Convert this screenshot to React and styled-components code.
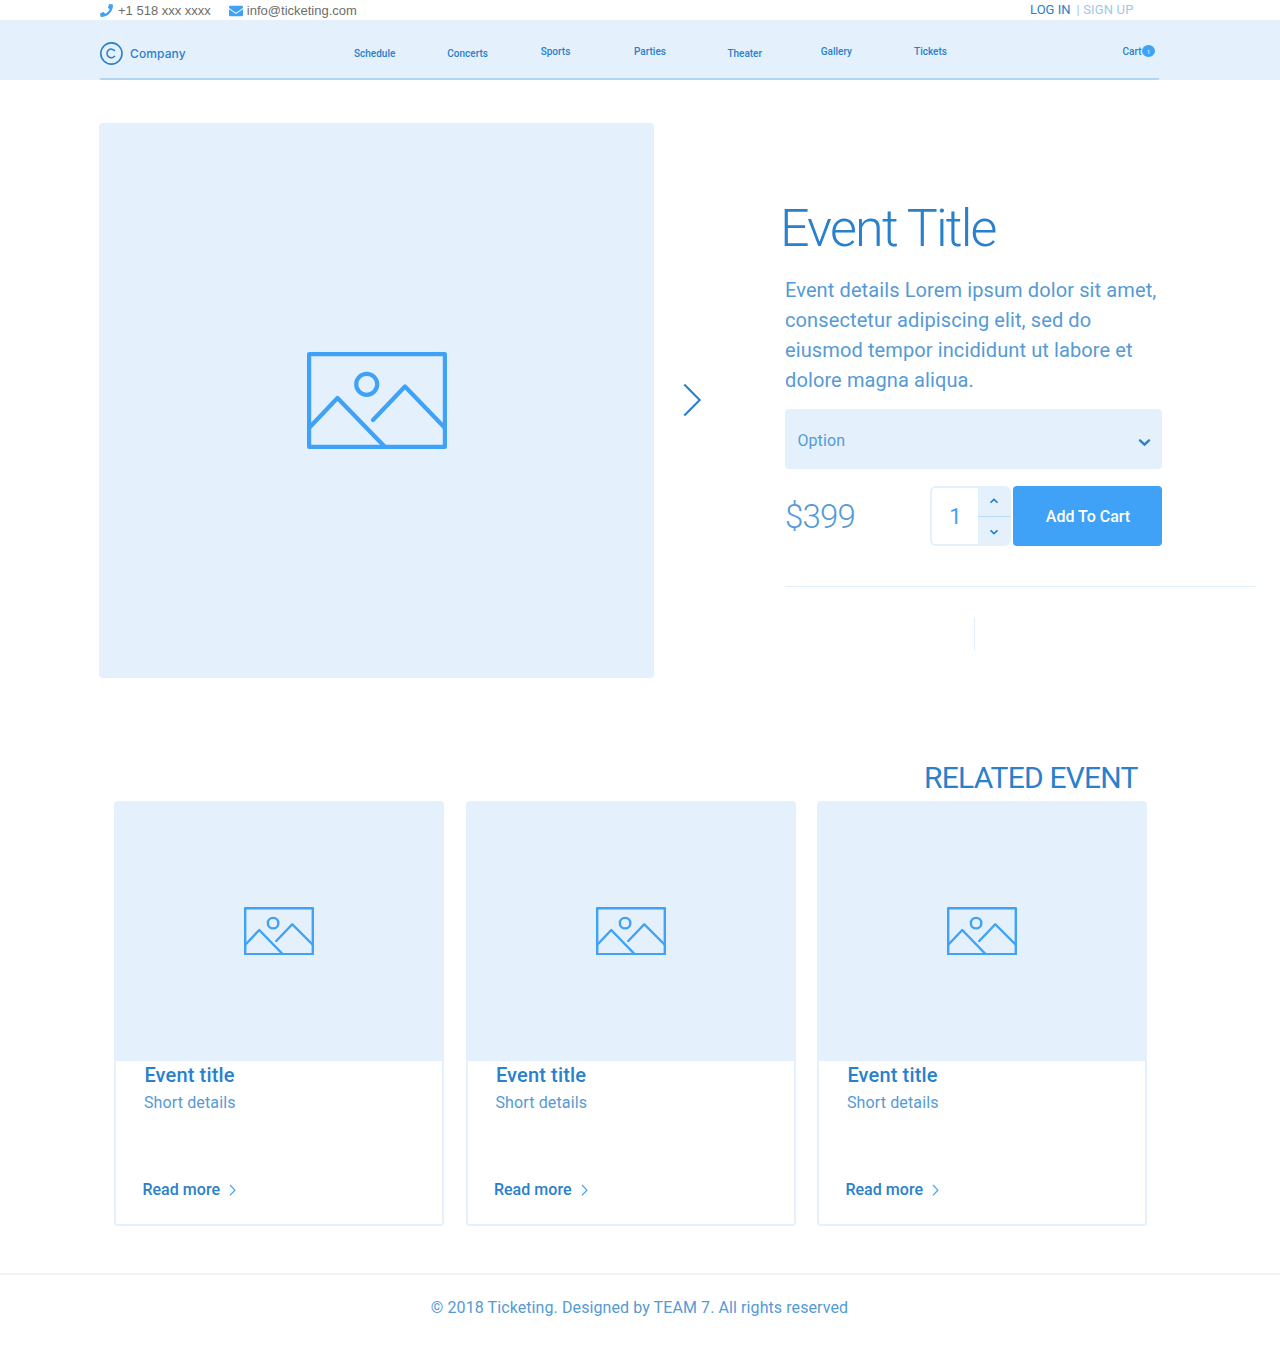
import React from "react";
import styled, { createGlobalStyle } from "styled-components";
import { FaPhone, FaEnvelope } from "react-icons/fa";

const GlobalStyle = createGlobalStyle`
  * { box-sizing: border-box; }
  body { margin: 0; background: #fff; font-family: Roboto, "Liberation Sans", sans-serif; }
  h1, h2, h3, p { margin: 0; font-weight: 400; }
  button { font: inherit; border: 0; padding: 0; background: none; }
  svg { display: block; flex: none; }
`;

const Page = styled.div`
  width: 1280px;
  height: 1347px;
  overflow: hidden;
  color: #2980cc;
`;

const TopBar = styled.div`
  display: flex;
  justify-content: space-between;
  height: 20px;
  padding: 0 146.5px 0 100px;
`;

const Contacts = styled.div`
  display: flex;
  align-items: center;
  gap: 18px;
  padding-top: 2px;
  font: 13px/18px "Liberation Sans", Arial, sans-serif;
  color: #6d6d6d;
`;

const Contact = styled.span`
  display: flex;
  align-items: center;
  gap: ${(p) => p.$gap};
  svg { margin-top: -1px; color: #3fa2f7; }
`;

const Account = styled.div`
  display: flex;
  font-size: 13px;
  line-height: 19px;
  white-space: pre;
`;

const SignUp = styled.span`
  margin-left: 6px;
  letter-spacing: 0.15px;
  color: #9fc6e8;
`;

const Header = styled.header`
  height: 60px;
  padding: 0 121px 0 100px;
  background: #e4f0fc;
`;

const HeaderInner = styled.div`
  display: flex;
  height: 60px;
  border-bottom: 2px solid #b2d5f3;
`;

const Brand = styled.div`
  display: flex;
  align-items: center;
  gap: 7px;
  width: 254px;
  height: 58px;
  padding-top: 9px;
  font: 500 12px/16px Inter, sans-serif;
  letter-spacing: 0.1px;
`;

const Nav = styled.nav`
  display: grid;
  grid-template-columns: repeat(7, 93.35px);
  height: 30px;
  margin-top: 22px;
  font-size: 10px;
  font-weight: 500;
  line-height: 19px;
`;

const NavItem = styled.a`
  padding-top: ${(p) => (p.$low ? "2px" : "0")};
`;

const Cart = styled.div`
  display: flex;
  align-items: center;
  height: 19px;
  margin: 22px 4px 0 auto;
  font-size: 10px;
  font-weight: 500;
`;

const CartCount = styled.span`
  width: 13px;
  height: 12px;
  margin: 0 0 1px 0.5px;
  border-radius: 50%;
  background: #3fa2f7;
  color: #d9ecfd;
  font-size: 6px;
  line-height: 13px;
  text-align: center;
`;

const Product = styled.section`
  display: flex;
  height: 683px;
  padding: 43px 0 0 99px;
`;

const Hero = styled.div`
  display: flex;
  align-items: center;
  justify-content: center;
  width: 555px;
  height: 555px;
  border-radius: 4px;
  background: #e4f0fc;
`;

const NextButton = styled.button`
  display: flex;
  align-items: center;
  width: 131px;
  height: 554px;
  padding-left: 29px;
  color: #2980cc;
`;

const Info = styled.div`
  width: 471px;
  padding-top: 76px;
`;

const Title = styled.h1`
  margin-left: -5px;
  font-size: 52px;
  font-weight: 300;
  line-height: 60px;
  letter-spacing: -1.8px;
`;

const Description = styled.p`
  width: 385px;
  margin-top: 16px;
  font-size: 20px;
  line-height: 30px;
  letter-spacing: 0.11px;
  color: #549ad6;
`;

const Select = styled.div`
  display: flex;
  align-items: center;
  justify-content: space-between;
  width: 377px;
  height: 60px;
  margin-top: 14px;
  padding: 3px 11px 0 12.4px;
  border-radius: 4px;
  background: #e4f0fc;
  font-size: 16px;
  letter-spacing: 0.1px;
  svg { margin-top: 3px; color: #2980cc; }
  span { color: #549ad6; }
`;

const BuyRow = styled.div`
  display: flex;
  width: 377px;
  height: 60px;
  margin-top: 17px;
`;

const Price = styled.div`
  width: 145px;
  padding-top: 1px;
  font-size: 33px;
  font-weight: 300;
  line-height: 60px;
  letter-spacing: -0.8px;
  color: #549ad6;
`;

const Quantity = styled.div`
  display: flex;
  width: 81px;
  height: 60px;
  border: 2px solid #e4f0fc;
  border-right: 0;
  border-radius: 6px;
  overflow: hidden;
`;

const QuantityValue = styled.div`
  width: 46px;
  padding-left: 1px;
  font-size: 22px;
  line-height: 57px;
  text-align: center;
  color: #3fa2f7;
`;

const Steps = styled.div`
  display: grid;
  grid-template-rows: 29px 27px;
  flex: 1;
  background: #e4f0fc;
`;

const Step = styled.button`
  display: flex;
  align-items: center;
  padding-left: 12px;
  color: #2980cc;
  border-bottom: ${(p) => (p.$divided ? "1px solid #b9dbf8" : "0")};
  svg { margin-top: ${(p) => (p.$divided ? "-2px" : "2px")}; }
`;

const AddButton = styled.button`
  width: 149px;
  height: 60px;
  margin-left: 2px;
  padding: 1px 0 0 1px;
  border-radius: 4px;
  background: #3fa2f7;
  color: #fff;
  font-size: 16px;
  font-weight: 500;
  line-height: 59px;
`;

const Rule = styled.div`
  height: 1px;
  margin-top: 40px;
  background: #e1effc;
`;

const ShortRule = styled.div`
  width: 1px;
  height: 33px;
  margin: 30px 0 0 189px;
  background: #e1effc;
`;

const Related = styled.section`
  padding: 0 133px 0 114px;
`;

const RelatedTitle = styled.h2`
  height: 38px;
  padding-right: 9.5px;
  font-size: 30px;
  line-height: 30px;
  letter-spacing: -0.8px;
  text-align: right;
`;

const Cards = styled.div`
  display: grid;
  grid-template-columns: repeat(3, 330px);
  justify-content: space-between;
`;

const Card = styled.article`
  height: 425px;
  border: 2px solid #e4f0fc;
  border-radius: 4px;
`;

const Thumb = styled.div`
  display: flex;
  align-items: center;
  justify-content: center;
  height: 258px;
  padding-bottom: 2px;
  background: #e4f0fc;
`;

const CardBody = styled.div`
  display: flex;
  flex-direction: column;
  align-items: flex-start;
  padding-left: 26.4px;
`;

const CardTitle = styled.h3`
  margin-left: 2px;
  font-size: 20px;
  font-weight: 500;
  line-height: 28px;
  letter-spacing: 0.15px;
`;

const CardText = styled.p`
  margin: 4px 0 0 1.6px;
  font-size: 16px;
  line-height: 20px;
  letter-spacing: 0.13px;
  color: #549ad6;
`;

const ReadMore = styled.a`
  display: flex;
  align-items: center;
  gap: 9px;
  margin-top: 67px;
  font-size: 16px;
  font-weight: 500;
  line-height: 20px;
  letter-spacing: 0.04px;
  svg { color: #3fa2f7; }
`;

const Footer = styled.footer`
  margin-top: 47px;
  padding: 22px 1px 0 0;
  border-top: 2px solid #f1f3f5;
  font-size: 16px;
  line-height: 22px;
  letter-spacing: 0.09px;
  text-align: center;
  color: #549ad6;
`;

const navItems = [
  ["Schedule", true],
  ["Concerts", true],
  ["Sports", false],
  ["Parties", false],
  ["Theater", true],
  ["Gallery", false],
  ["Tickets", false],
];

function Picture({ width, stroke = 4.2, shift = 0 }) {
  const edge = stroke / 2;
  return (
    <svg width={width} height={width * (97 / 140)} viewBox="0 0 140 97" fill="none" stroke="#3fa2f7" strokeWidth={stroke} strokeLinejoin="round">
      <rect x={edge} y={edge} width={140 - stroke} height={97 - stroke} />
      <circle cx={59.7 - shift} cy="32.3" r="10.5" />
      <path d="M2 76L30.5 46L78 95" />
      <path d={`M${66 - shift} 68L${98 - shift} 34.5L138 76`} strokeLinecap="round" />
    </svg>
  );
}

function Chevron({ width, height, points, stroke, cap = "butt" }) {
  return (
    <svg width={width} height={height} viewBox={`0 0 ${width} ${height}`} fill="none" stroke="currentColor" strokeWidth={stroke} strokeLinecap={cap}>
      <polyline points={points} />
    </svg>
  );
}

function Logo() {
  return (
    <svg width="23" height="24" viewBox="0 0 23 24" fill="none" stroke="#2980cc">
      <circle cx="11.4" cy="11.5" r="10.6" strokeWidth="1.6" />
      <path d="M14.9 9A4.3 4.3 0 1 0 14.9 13.8" strokeWidth="1.5" />
    </svg>
  );
}

export default function App() {
  return (
    <Page>
      <GlobalStyle />
      <TopBar>
        <Contacts>
          <Contact $gap="5px"><FaPhone size={13} />+1 518 xxx xxxx</Contact>
          <Contact $gap="4px"><FaEnvelope size={14} />info@ticketing.com</Contact>
        </Contacts>
        <Account>LOG IN<SignUp>| SIGN UP</SignUp></Account>
      </TopBar>
      <Header>
        <HeaderInner>
          <Brand><Logo />Company</Brand>
          <Nav>
            {navItems.map(([name, low]) => <NavItem key={name} $low={low}>{name}</NavItem>)}
          </Nav>
          <Cart>Cart<CartCount>1</CartCount></Cart>
        </HeaderInner>
      </Header>
      <Product>
        <Hero><Picture width={140} /></Hero>
        <NextButton aria-label="Next">
          <Chevron width={19} height={34} points="1.3,1.5 16.7,17 1.3,32.5" stroke={2.1} />
        </NextButton>
        <Info>
          <Title>Event Title</Title>
          <Description>
            Event details Lorem ipsum dolor sit amet, consectetur adipiscing elit, sed do eiusmod tempor incididunt ut labore et dolore magna aliqua.
          </Description>
          <Select>
            <span>Option</span>
            <Chevron width={13} height={9} points="2,2.4 6.5,6.7 11,2.4" stroke={2.4} cap="round" />
          </Select>
          <BuyRow>
            <Price>$399</Price>
            <Quantity>
              <QuantityValue>1</QuantityValue>
              <Steps>
                <Step $divided aria-label="Increase">
                  <Chevron width={8} height={6} points="0.5,4.7 4,1.4 7.5,4.7" stroke={1.7} />
                </Step>
                <Step aria-label="Decrease">
                  <Chevron width={8} height={6} points="0.5,1.3 4,4.6 7.5,1.3" stroke={1.7} />
                </Step>
              </Steps>
            </Quantity>
            <AddButton>Add To Cart</AddButton>
          </BuyRow>
          <Rule />
          <ShortRule />
        </Info>
      </Product>
      <Related>
        <RelatedTitle>RELATED EVENT</RelatedTitle>
        <Cards>
          {[1, 2, 3].map((id) => (
            <Card key={id}>
              <Thumb><Picture width={70} stroke={4.8} shift={1.5} /></Thumb>
              <CardBody>
                <CardTitle>Event title</CardTitle>
                <CardText>Short details</CardText>
                <ReadMore>
                  Read more
                  <Chevron width={8} height={12} points="1,1 5.9,6.2 1,11.4" stroke={1.2} />
                </ReadMore>
              </CardBody>
            </Card>
          ))}
        </Cards>
      </Related>
      <Footer>© 2018 Ticketing. Designed by TEAM 7. All rights reserved</Footer>
    </Page>
  );
}
